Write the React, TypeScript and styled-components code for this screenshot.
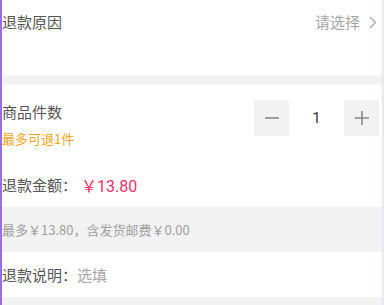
import React from "react";
import styled, { createGlobalStyle } from "styled-components";

const Global = createGlobalStyle`
  html, body { margin: 0; padding: 0; background: #f2f2f2; }
  body { font-family: "Noto Sans CJK SC", "Noto Sans", sans-serif; }
`;

const Page = styled.div`
  width: 384px;
  height: 305px;
  box-sizing: border-box;
  border-left: 2px solid #9a6ee0;
  border-right: 2px solid #ece4f7;
  background: #f2f2f2;
  overflow: hidden;
  display: flex;
  flex-direction: column;
`;

const Block = styled.div<{ $h: number }>`
  background: #fff;
  height: ${(p) => p.$h}px;
  box-sizing: border-box;
  flex-shrink: 0;
`;

const ReasonRow = styled(Block)`
  display: flex;
  justify-content: space-between;
  align-items: flex-start;
  padding: 12px 5px 0 0;
`;

const Label = styled.span`
  font-size: 15px;
  line-height: 20px;
  color: #555;
`;

const Placeholder = styled.span`
  font-size: 15px;
  line-height: 20px;
  color: #a5a5a5;
`;

const Select = styled.span`
  display: flex;
  align-items: center;
  gap: 9px;
`;

const Gap = styled.div<{ $h: number }>`
  height: ${(p) => p.$h}px;
  flex-shrink: 0;
`;

const QtyRow = styled.div`
  display: flex;
  justify-content: space-between;
  align-items: flex-start;
`;

const QtyInfo = styled.div`
  display: flex;
  flex-direction: column;
  padding-top: 17px;
  gap: 8px;
`;

const Hint = styled.span`
  font-size: 13px;
  line-height: 18px;
  color: #f5a623;
`;

const Stepper = styled.div`
  display: flex;
  align-items: center;
  margin-top: 15px;
  margin-right: 3px;
`;

const StepBtn = styled.div`
  width: 35px;
  height: 36px;
  background: #f2f2f2;
  display: flex;
  align-items: center;
  justify-content: center;
`;

const Count = styled.span`
  width: 55px;
  text-align: center;
  font-size: 15px;
  color: #333;
  font-family: "Roboto", sans-serif;
`;

const AmountRow = styled.div`
  display: flex;
  align-items: center;
  margin-top: 27px;
  height: 20px;
`;

const Price = styled.span`
  font-size: 16px;
  color: #f5306b;
  font-family: "Roboto", "Noto Sans CJK SC", sans-serif;
  margin-left: 4px;
`;

const Note = styled.div`
  height: 45px;
  display: flex;
  align-items: center;
  font-size: 13px;
  color: #a0a0a0;
  flex-shrink: 0;
`;

const DescRow = styled(Block)`
  display: flex;
  align-items: center;
`;

export default function App() {
  return (
    <>
      <Global />
      <Page>
        <ReasonRow $h={75}>
          <Label>退款原因</Label>
          <Select>
            <Placeholder>请选择</Placeholder>
            <svg width="8" height="13" viewBox="0 0 8 13">
              <path d="M1 1l5.5 5.5L1 12" fill="none" stroke="#a5a5a5" strokeWidth="1.3" />
            </svg>
          </Select>
        </ReasonRow>
        <Gap $h={10} />
        <Block $h={122}>
          <QtyRow>
            <QtyInfo>
              <Label>商品件数</Label>
              <Hint>最多可退1件</Hint>
            </QtyInfo>
            <Stepper>
              <StepBtn>
                <svg width="16" height="16" viewBox="0 0 16 16">
                  <path d="M1 8h14" stroke="#888" strokeWidth="1.6" />
                </svg>
              </StepBtn>
              <Count>1</Count>
              <StepBtn>
                <svg width="16" height="16" viewBox="0 0 16 16">
                  <path d="M1 8h14M8 1v14" stroke="#888" strokeWidth="1.6" />
                </svg>
              </StepBtn>
            </Stepper>
          </QtyRow>
          <AmountRow>
            <Label>退款金额：</Label>
            <Price>￥13.80</Price>
          </AmountRow>
        </Block>
        <Note>最多￥13.80，含发货邮费￥0.00</Note>
        <DescRow $h={45}>
          <Label>退款说明：</Label>
          <Placeholder>选填</Placeholder>
        </DescRow>
      </Page>
    </>
  );
}
